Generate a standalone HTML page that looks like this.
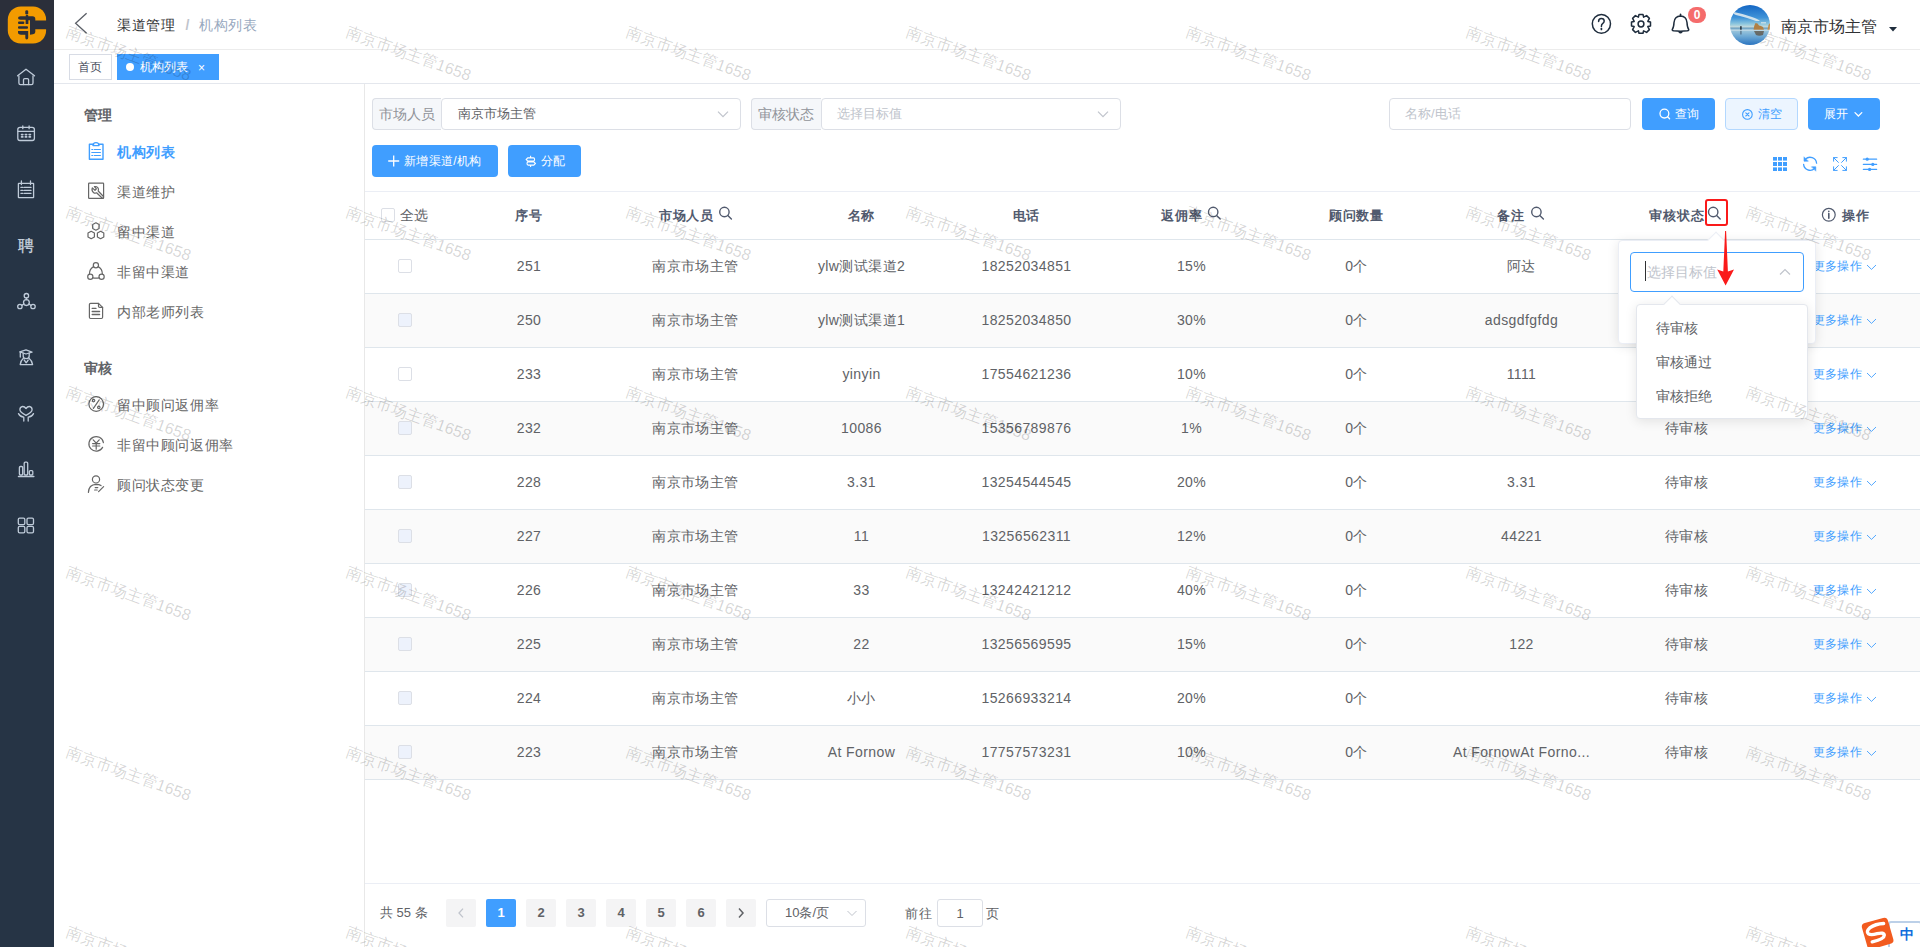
<!DOCTYPE html>
<html><head><meta charset="utf-8"><style>
*{box-sizing:border-box;margin:0;padding:0}
html,body{width:1920px;height:947px;overflow:hidden;background:#fff;font-family:"Liberation Sans",sans-serif;font-size:14px;color:#606266}
.a{position:absolute}
svg{display:block}
#side{left:0;top:0;width:54px;height:947px;background:#263445}
#logo{left:0;top:0;width:54px;height:50px;background:#2b2f3a}
#nav{left:54px;top:0;width:1866px;height:50px;border-bottom:1px solid #ececec}
#tags{left:54px;top:50px;width:1866px;height:34px;border-bottom:1px solid #e4e7ed}
.tag{position:absolute;top:4px;height:26px;line-height:24px;font-size:12px;border:1px solid #d8dce5;color:#495060;white-space:nowrap}
#sub{left:54px;top:84px;width:311px;height:863px;border-right:1px solid #e8e8e8}
.st{position:absolute;left:30px;font-size:14px;color:#606266;font-weight:bold;line-height:20px;margin-top:1px;letter-spacing:0.3px}
.si{position:absolute;left:63px;font-size:14px;color:#666;line-height:20px;white-space:nowrap;letter-spacing:0.6px;margin-top:1px}
.sic{position:absolute;left:33px}
.inp{position:absolute;height:32px;border:1px solid #dcdfe6;border-radius:4px;background:#fff}
.lab{position:absolute;height:32px;border:1px solid #dcdfe6;border-radius:4px 0 0 4px;background:#f5f7fa;color:#909399;line-height:30px;font-size:14px;padding-left:6px;border-right:0}
.btn{position:absolute;height:32px;border-radius:4px;background:#409eff;color:#fff;font-size:12px;line-height:32px;white-space:nowrap;letter-spacing:0.3px}
.row{position:absolute;left:365px;width:1555px;height:54px;border-bottom:1px solid #dfe6ec}
.row.alt{background:#fafafa}
.c{position:absolute;top:0px;height:53px;line-height:53px;text-align:center;white-space:nowrap;letter-spacing:0.4px}
.cb{position:absolute;width:14px;height:14px;border:1px solid #dcdfe6;border-radius:2px;background:#fff}
.cb.dis{background:#edf2fc}
.more{color:#409eff;font-size:12px}
.pg{position:absolute;top:899px;width:30px;height:28px;line-height:28px;text-align:center;background:#f4f4f5;color:#606266;font-weight:bold;font-size:13px;border-radius:2px}
.wmt{position:absolute;font-size:16px;color:rgba(0,0,0,0.17);transform-origin:0 0;transform:rotate(20deg);white-space:nowrap;pointer-events:none;z-index:100}
</style></head><body>
<div id="side" class="a"></div>
<div id="logo" class="a"></div>
<svg class="a" style="left:0;top:0" width="54" height="50" viewBox="0 0 54 50"><rect x="7.8" y="6.4" width="38.3" height="37.1" rx="13" ry="13" fill="#f39b00"/><g fill="#2b2f3a"><path d="M18 18 Q18 16.2 20.5 16.2 H32.5 Q35.3 16.2 35.3 19 V20.4 H47 V29.3 H35.3 V32 Q35.3 33.8 33 34.2 L30 34.8 V20.2 H28.2 V24 H25.8 V19.7 H20.5 Q18 19.7 18 18 Z"/><rect x="18" y="21.5" width="6.3" height="2.5" rx="1"/><rect x="18" y="26.2" width="10" height="2.6" rx="1"/><path d="M18 31 H28.2 V37.8 Q28.2 39.6 26.7 39.6 Q25.3 39.6 25.3 37.8 V34.8 H21 Q18 34.6 18 32.5 Z"/><rect x="25.3" y="10.2" width="2.9" height="4.4" rx="1.4"/><rect x="25.8" y="15" width="2.4" height="9" rx="0.5"/></g></svg>
<svg class="a" style="left:9px;top:60px" width="34" height="34" viewBox="9 60 34 34" fill="none" stroke="#bfcbd9" stroke-width="1.3" stroke-linecap="round" stroke-linejoin="round"><path d="M17.6 75.8 L26 69.2 L34.5 75.8"/><path d="M18.9 76 V83 Q18.9 84.6 20.5 84.6 H31.4 Q33 84.6 33 83 V76"/><path d="M23.5 84.6 V79.8 Q23.5 78.6 24.7 78.6 H27.4 Q28.6 78.6 28.6 79.8 V84.6"/></svg>
<svg class="a" style="left:9px;top:116px" width="34" height="34" viewBox="9 116 34 34" fill="none" stroke="#bfcbd9" stroke-width="1.3" stroke-linecap="round" stroke-linejoin="round"><rect x="17.8" y="127.3" width="16.6" height="13.2" rx="2.2"/><path d="M18 131.3 H34.3"/><path d="M22.8 126 V128.7 M29.1 126 V128.7"/><g stroke-width="1.6"><path d="M21.5 134.6h1.4M25.3 134.6h1.4M29.1 134.6h1.4M21.5 136.9h1.4M25.3 136.9h1.4M29.1 136.9h1.4"/></g></svg>
<svg class="a" style="left:9px;top:172px" width="34" height="34" viewBox="9 172 34 34" fill="none" stroke="#bfcbd9" stroke-width="1.3" stroke-linecap="round" stroke-linejoin="round"><rect x="18.4" y="183.3" width="15.2" height="14.3" rx="0.4"/><path d="M21.4 181 V184.5 M30.5 181 V184.5"/><path d="M20.9 187.4h2M24.2 187.4h6.8M20.9 190.4h2M24.2 190.4h6.8M20.9 193.3h2M24.2 193.3h6.8"/></svg>
<div class="a" style="left:17px;top:237px;width:18px;height:18px;line-height:18px;font-size:16px;color:#c8d2de;text-align:center;-webkit-text-stroke:0.3px #c8d2de">聘</div>
<svg class="a" style="left:9px;top:284px" width="34" height="34" viewBox="9 284 34 34" fill="none" stroke="#bfcbd9" stroke-width="1.3" stroke-linecap="round" stroke-linejoin="round"><circle cx="26.4" cy="295.7" r="2.2"/><circle cx="26.4" cy="302.6" r="2.9"/><circle cx="19.9" cy="306.5" r="2.2"/><circle cx="33" cy="306.5" r="2.2"/><path d="M26.4 297.9 V299.7 M23.8 303.9 L22 305.3 M29 303.9 L30.8 305.3"/></svg>
<svg class="a" style="left:9px;top:340px" width="34" height="34" viewBox="9 340 34 34" fill="none" stroke="#bfcbd9" stroke-width="1.3" stroke-linecap="round" stroke-linejoin="round"><path d="M19.8 351.8 L26 349.8 L32 352.2 L26 354 Z"/><path d="M20.3 352 V357"/><path d="M23.2 353.2 V356 Q23.2 358.6 26.2 358.6 Q29.2 358.6 29.2 356 V353.2"/><path d="M23.4 358.2 Q20.4 360.8 20.2 364.6 H32.6 Q32.2 360.8 29 358.2"/><path d="M24.2 360 L26.2 362.8 L28.2 360"/></svg>
<svg class="a" style="left:9px;top:396px" width="34" height="34" viewBox="9 396 34 34" fill="none" stroke="#bfcbd9" stroke-width="1.3" stroke-linecap="round" stroke-linejoin="round"><path d="M26 408.5 Q24.5 406.4 22.6 406.5 Q19.9 406.8 19.9 409.8 Q19.9 412.3 26 415.3 Q32.1 412.3 32.1 409.8 Q32.1 406.8 29.4 406.5 Q27.5 406.4 26 408.5 Z"/><path d="M18.5 413.6 Q20 416.6 23.8 417.2 V421"/><path d="M33.5 413.6 Q32 416.6 28.2 417.2 V421"/></svg>
<svg class="a" style="left:9px;top:452px" width="34" height="34" viewBox="9 452 34 34" fill="none" stroke="#bfcbd9" stroke-width="1.3" stroke-linecap="round" stroke-linejoin="round"><rect x="19.4" y="466.5" width="3.3" height="8.5" rx="1"/><rect x="24.2" y="462.2" width="3.5" height="12.8" rx="1"/><rect x="29.3" y="470.6" width="3.5" height="4.4" rx="1"/><path d="M18.5 476.5 H33.8" stroke-width="1.5"/></svg>
<svg class="a" style="left:9px;top:508px" width="34" height="34" viewBox="9 508 34 34" fill="none" stroke="#bfcbd9" stroke-width="1.3" stroke-linecap="round" stroke-linejoin="round"><rect x="18.3" y="518.1" width="6.5" height="6.5" rx="1.3"/><rect x="27" y="518.1" width="6.5" height="6.5" rx="1.3"/><rect x="18.3" y="526.4" width="6.5" height="6.5" rx="1.3"/><rect x="27" y="526.4" width="6.5" height="6.5" rx="1.3"/></svg>
<div id="nav" class="a"></div>
<svg class="a" style="left:70px;top:8px" width="24" height="32" viewBox="70 8 24 32" fill="none" stroke="#5a5e66" stroke-width="1.3"><path d="M86.6 13.3 L75.6 23.3 L86.6 33.3"/></svg>
<svg class="a" style="left:1585px;top:5px" width="130" height="40" viewBox="1585 5 130 40" fill="none" stroke="#1f2d3d" stroke-width="1.5" stroke-linecap="round" stroke-linejoin="round"><ellipse cx="1601.4" cy="23.8" rx="9.1" ry="9.4"/><path d="M1598.6 21.4 Q1598.6 18.4 1601.4 18.4 Q1604.2 18.4 1604.2 21 Q1604.2 22.6 1602.6 23.6 Q1601.4 24.4 1601.4 26.4"/><path d="M1601.4 28.6 V29.4" stroke-width="1.7"/><path d="M1639 14.5 H1643 L1643.6 17.2 L1646.6 15.6 L1649.4 18.4 L1647.8 21.4 L1650.5 22 V26 L1647.8 26.6 L1649.4 29.6 L1646.6 32.4 L1643.6 30.8 L1643 33.3 H1639 L1638.4 30.8 L1635.4 32.4 L1632.6 29.6 L1634.2 26.6 L1631.5 26 V22 L1634.2 21.4 L1632.6 18.4 L1635.4 15.6 L1638.4 17.2 Z"/><circle cx="1641" cy="24" r="2.9"/><path d="M1680.5 14.2 V16"/><path d="M1680.5 16 Q1674.6 16.2 1674 22.5 Q1673.8 27.4 1672.4 29.2 Q1671.8 30.4 1673.6 30.8 Q1680.5 31.6 1687.4 30.8 Q1689.2 30.4 1688.6 29.2 Q1687.2 27.4 1687 22.5 Q1686.4 16.2 1680.5 16 Z"/><path d="M1679 31.8 Q1680.5 33.6 1682 31.8"/></svg>
<div class="a" style="left:1688px;top:7px;width:18px;height:16px;border-radius:8px;background:#f56c6c;color:#fff;font-size:12px;font-weight:bold;line-height:16px;text-align:center">0</div>
<svg class="a" style="left:1730px;top:5px;z-index:150" width="40" height="40" viewBox="0 0 40 40"><defs><clipPath id="avc"><circle cx="20" cy="20" r="20"/></clipPath><linearGradient id="sky" x1="0" y1="0" x2="0" y2="1"><stop offset="0" stop-color="#1466c4"/><stop offset="0.55" stop-color="#3f93d8"/><stop offset="0.82" stop-color="#8cc6de"/><stop offset="1" stop-color="#d9e2dc"/></linearGradient><linearGradient id="sea" x1="0" y1="0" x2="0" y2="1"><stop offset="0" stop-color="#5d93b8"/><stop offset="0.15" stop-color="#9fc8dc"/><stop offset="0.5" stop-color="#6ea9d4"/><stop offset="1" stop-color="#2a74c0"/></linearGradient></defs><g clip-path="url(#avc)"><rect width="40" height="23" fill="url(#sky)"/><rect y="22.5" width="40" height="17.5" fill="url(#sea)"/><path d="M4 7 Q14 9 22 12 Q28 14 30 16 L26 16 Q18 13 10 11 Q5 10 4 9 Z" fill="#e8eef0" opacity="0.85"/><path d="M31 17 H36 V18.5 H31 Z" fill="#e0e8ea" opacity="0.7"/><path d="M23.5 25 L24.2 21 L25.5 18 L27.5 18.6 L29 20.6 L31 21 L33 22 L34 25 Z" fill="#b08045"/><path d="M37.5 25 L38.5 20 L40 18 V25 Z" fill="#c48d48"/><path d="M24 26 H34 L33 30 Q29 31.5 26 30 Z" fill="#5e5040" opacity="0.75"/><rect x="10.2" y="21.2" width="1.4" height="4" fill="#1d2630"/><rect x="10.2" y="26" width="1.4" height="3.5" fill="#3a4a5a" opacity="0.6"/><path d="M0 24.5 H40 V26 H0 Z" fill="#d7e6ee" opacity="0.5"/></g></svg>
<div class="a" style="left:1781px;top:17px;font-size:16px;line-height:20px;color:#303133;white-space:nowrap">南京市场主管</div>
<svg class="a" style="left:1887px;top:25px" width="12" height="8" viewBox="0 0 12 8"><path d="M2 2 H10 L6 6.5 Z" fill="#1f2d3d"/></svg>
<div class="a" style="left:117px;top:15px;font-size:14px;line-height:20px;color:#303133;white-space:nowrap;letter-spacing:0.6px">渠道管理<span style="color:#c0c4cc;margin:0 9px 0 10px;font-weight:bold">/</span><span style="color:#97a8be">机构列表</span></div>
<div id="tags" class="a">
<div class="tag" style="left:15px;width:43px;padding-left:8px">首页</div>
<div class="tag" style="left:63px;width:102px;background:#409eff;border-color:#409eff;color:#fff;padding-left:22px">机构列表<span style="position:absolute;left:8px;top:8px;width:8px;height:8px;border-radius:50%;background:#fff"></span><span style="margin-left:10px;font-size:12px;position:relative;top:1px">×</span></div>
</div>
<div id="sub" class="a"></div>
<div class="st" style="top:104px;left:84px">管理</div>
<div class="si" style="left:117px;top:141px;color:#409eff;font-weight:bold">机构列表</div>
<div class="si" style="left:117px;top:181px;">渠道维护</div>
<div class="si" style="left:117px;top:221px;">留中渠道</div>
<div class="si" style="left:117px;top:261px;">非留中渠道</div>
<div class="si" style="left:117px;top:301px;">内部老师列表</div>
<div class="st" style="top:357px;left:84px">审核</div>
<div class="si" style="left:117px;top:394px">留中顾问返佣率</div>
<div class="si" style="left:117px;top:434px">非留中顾问返佣率</div>
<div class="si" style="left:117px;top:474px">顾问状态变更</div>
<div class="lab" style="left:372px;top:98px;width:69px">市场人员</div>
<div class="inp" style="left:441px;top:98px;width:300px;border-radius:4px;padding-left:16px;line-height:30px;color:#606266;font-size:13px">南京市场主管</div>
<div class="lab" style="left:751px;top:98px;width:70px">审核状态</div>
<div class="inp" style="left:821px;top:98px;width:300px;border-radius:4px;padding-left:15px;line-height:30px;color:#c0c4cc;font-size:13px">选择目标值</div>
<div class="inp" style="left:1389px;top:98px;width:242px;padding-left:15px;line-height:30px;color:#c0c4cc;font-size:13px">名称/电话</div>
<div class="btn" style="left:1642px;top:98px;width:73px;padding-left:33px">查询</div>
<div class="btn" style="left:1725px;top:98px;width:73px;padding-left:32px;background:#ecf5ff;border:1px solid #b3d8ff;color:#409eff;line-height:30px">清空</div>
<div class="btn" style="left:1808px;top:98px;width:72px;padding-left:16px">展开</div>
<div class="btn" style="left:372px;top:145px;width:126px;padding-left:32px">新增渠道/机构</div>
<div class="btn" style="left:508px;top:145px;width:73px;padding-left:33px">分配</div>
<svg class="a" style="left:80px;top:130px" width="40" height="370" viewBox="80 130 40 370" fill="none" stroke-linecap="round" stroke-linejoin="round"><g stroke="#409eff" stroke-width="1.4"><path d="M93.6 144.2 H89.4 V159.3 H103 V144.2 H98.6"/><path d="M93 145.6 Q93 142.6 96 142.6 Q99 142.6 99 145.6 Z"/><path d="M91.8 149.5h1M94.4 149.5h6M91.8 152.5h8.6M91.8 155.5h1M94.4 155.5h6" stroke-width="1.2"/></g><g stroke="#666" stroke-width="1.2"><rect x="88.6" y="183.2" width="15" height="15.2" rx="0.6"/><path d="M92.4 187.8 Q91.2 190.8 93.4 192.4 Q95 193.6 96.6 192.8 L101.8 197.8 Q102.8 198.6 103.4 197.6 Q103.8 196.8 103 196 L98.2 191 Q99 189 97.8 187.6 Q96.4 186.2 94.4 186.6 L96.4 188.8 L95 190.4 Z"/><path d="M95.9 222.8 L99.1 224.6 V228.4 L95.9 230.2 L92.7 228.4 V224.6 Z"/><path d="M91.2 231.3 L94.4 233.1 V236.9 L91.2 238.7 L88 236.9 V233.1 Z"/><path d="M100.6 231.3 L103.8 233.1 V236.9 L100.6 238.7 L97.4 236.9 V233.1 Z"/><circle cx="95.9" cy="265.3" r="2.6"/><circle cx="90.3" cy="276.8" r="2.6"/><circle cx="101.6" cy="276.8" r="2.6"/><path d="M93.6 266.6 Q89.4 268.8 89.4 274.2 M98.2 266.6 Q102.4 268.8 102.4 274.2 M92.9 277.8 Q95.9 278.6 99 277.8"/><path d="M98.5 303.3 H90.6 Q89.4 303.3 89.4 304.5 V317.3 Q89.4 318.5 90.6 318.5 H101.4 Q102.6 318.5 102.6 317.3 V307.4 Z"/><path d="M98.5 303.3 V306.2 Q98.5 307.4 99.7 307.4 H102.6"/><path d="M92.2 308.4h3.8M92.2 311.5h7.4M92.2 314.5h7.4" stroke-width="1.3"/><circle cx="96.2" cy="404" r="7.3"/><path d="M99.2 399.8 L93.4 408.4"/><circle cx="93.6" cy="400.6" r="1.2"/><circle cx="98.8" cy="407.4" r="1.2"/><path d="M102.6 447.4 A7.3 7.3 0 1 1 103.4 442.6"/><path d="M93.2 439.8 L96.2 443.2 L99.2 439.8 M92.6 443.6h7.2M92.6 446h7.2M96.2 443.2V449.2"/><circle cx="96" cy="479.4" r="3.6"/><path d="M88.4 492.4 Q88.8 484.8 96 484.4 Q99.2 484.4 101 485.6"/><path d="M95.2 487.6h2.6M94.6 490h2.6M98.6 491.6 L103.6 486.6"/></g></svg>
<svg class="a" style="left:372px;top:145px" width="220" height="33" viewBox="372 145 220 33" fill="none" stroke="#fff" stroke-width="1.3"><path d="M393.7 155.5 V166.5 M388.2 161 H399.2"/><path d="M526.2 159.5 L527.8 157.9 H533.4 Q534.6 157.9 534.6 159.5 Q534.6 161.1 533.4 161.1 H527.8 Z M535.4 163.5 L533.8 161.9 H528.2 Q527 161.9 527 163.5 Q527 165.1 528.2 165.1 H533.8 Z M530.6 155.8 V157.9 M530.6 165.1 V167" stroke-width="1.1"/></svg>
<svg class="a" style="left:1642px;top:98px" width="240" height="32" viewBox="1642 98 240 32" fill="none" stroke-width="1.3" stroke-linecap="round"><circle cx="1664.4" cy="113.6" r="4.4" stroke="#fff"/><path d="M1667.6 116.8 L1669.6 118.8" stroke="#fff"/><circle cx="1747.4" cy="114.4" r="4.8" stroke="#409eff" stroke-width="1.1"/><path d="M1745.8 112.8 L1749 116 M1749 112.8 L1745.8 116" stroke="#409eff" stroke-width="1.1"/><path d="M1855 112.6 L1858.4 116 L1861.8 112.6" stroke="#fff"/></svg>
<svg class="a" style="left:700px;top:98px" width="420" height="32" viewBox="700 98 420 32" fill="none" stroke="#c0c4cc" stroke-width="1.2"><path d="M718 111.6 L723 116.6 L728 111.6"/><path d="M1098 111.6 L1103 116.6 L1108 111.6"/></svg>
<svg class="a" style="left:1770px;top:150px" width="120" height="30" viewBox="1770 150 120 30" fill="none" stroke="#409eff" stroke-width="1.3" stroke-linecap="round"><g fill="#409eff" stroke="none"><rect x="1773" y="157" width="4" height="3.6"/><rect x="1778" y="157" width="4" height="3.6"/><rect x="1783" y="157" width="4" height="3.6"/><rect x="1773" y="162" width="4" height="4"/><rect x="1778" y="162" width="4" height="4"/><rect x="1783" y="162" width="4" height="4"/><rect x="1773" y="167.4" width="4" height="3.6"/><rect x="1778" y="167.4" width="4" height="3.6"/><rect x="1783" y="167.4" width="4" height="3.6"/></g><path d="M1816.6 163.2 A6.6 6.6 0 0 0 1805.4 159.2"/><path d="M1803.6 164.4 A6.6 6.6 0 0 0 1814.6 168.6"/><path d="M1804 157.2 V161.2 H1808 Z" fill="#409eff" stroke-width="0.6"/><path d="M1815.8 170.8 V166.8 H1811.8 Z" fill="#409eff" stroke-width="0.6"/><g stroke-width="1"><path d="M1833.6 161.2 V157.6 H1837.2 M1833.6 157.6 L1838.4 162.4 M1846.4 161.2 V157.6 H1842.8 M1846.4 157.6 L1841.6 162.4 M1833.6 166.8 V170.4 H1837.2 M1833.6 170.4 L1838.4 165.6 M1846.4 166.8 V170.4 H1842.8 M1846.4 170.4 L1841.6 165.6"/></g><path d="M1863.4 159.2 H1876.6 M1863.4 164.4 H1876.6 M1863.4 169.4 H1876.6"/><g fill="#409eff" stroke="none"><circle cx="1867.2" cy="159.2" r="1.6"/><circle cx="1872.8" cy="164.4" r="1.6"/><circle cx="1869.6" cy="169.4" r="1.6"/></g></svg>
<div class="a" style="left:365px;top:191px;width:1555px;height:49px;border-top:1px solid #ebeef5;border-bottom:1px solid #dfe6ec"></div>
<div class="cb" style="left:381px;top:208px"></div>
<div class="a" style="left:400px;top:205px;line-height:20px;color:#606266">全选</div>
<div class="c" style="left:446px;width:166px;top:192px;height:48px;line-height:48px;font-weight:bold;font-size:13px;letter-spacing:0.8px;color:#515a6e;">序号</div>
<div class="c" style="left:612px;width:167px;top:192px;height:48px;line-height:48px;font-weight:bold;font-size:13px;letter-spacing:0.8px;color:#515a6e;padding-right:18px">市场人员</div>
<div class="c" style="left:779px;width:165px;top:192px;height:48px;line-height:48px;font-weight:bold;font-size:13px;letter-spacing:0.8px;color:#515a6e;">名称</div>
<div class="c" style="left:944px;width:165px;top:192px;height:48px;line-height:48px;font-weight:bold;font-size:13px;letter-spacing:0.8px;color:#515a6e;">电话</div>
<div class="c" style="left:1109px;width:165px;top:192px;height:48px;line-height:48px;font-weight:bold;font-size:13px;letter-spacing:0.8px;color:#515a6e;padding-right:19px">返佣率</div>
<div class="c" style="left:1274px;width:165px;top:192px;height:48px;line-height:48px;font-weight:bold;font-size:13px;letter-spacing:0.8px;color:#515a6e;">顾问数量</div>
<div class="c" style="left:1439px;width:165px;top:192px;height:48px;line-height:48px;font-weight:bold;font-size:13px;letter-spacing:0.8px;color:#515a6e;padding-right:21px">备注</div>
<div class="c" style="left:1604px;width:165px;top:192px;height:48px;line-height:48px;font-weight:bold;font-size:13px;letter-spacing:0.8px;color:#515a6e;padding-right:19px">审核状态</div>
<div class="c" style="left:1769px;width:151px;top:192px;height:48px;line-height:48px;font-weight:bold;font-size:13px;letter-spacing:0.8px;color:#515a6e;padding-left:23px">操作</div>
<svg class="a" style="left:700px;top:200px" width="1200" height="30" viewBox="700 200 1200 30" fill="none" stroke="#515a6e" stroke-width="1.4" stroke-linecap="round"><circle cx="724.4" cy="212" r="4.7"/><path d="M727.8 215.4 L731.4 219"/><circle cx="1213.2" cy="212" r="4.7"/><path d="M1216.6000000000001 215.4 L1220.2 219"/><circle cx="1536.4" cy="212" r="4.7"/><path d="M1539.8000000000002 215.4 L1543.4 219"/><circle cx="1713.2" cy="212" r="4.7"/><path d="M1716.6000000000001 215.4 L1720.2 219"/><circle cx="1828.8" cy="214.8" r="6.4" stroke-width="1.2"/><path d="M1828.8 213.6 V218.2 M1828.8 211.2 V211.4" stroke-width="1.6"/></svg>
<div class="row" style="top:240px">
<div class="cb" style="left:33px;top:19px"></div>
<div class="c" style="left:81px;width:166px">251</div>
<div class="c" style="left:247px;width:167px">南京市场主管</div>
<div class="c" style="left:414px;width:165px">ylw测试渠道2</div>
<div class="c" style="left:579px;width:165px">18252034851</div>
<div class="c" style="left:744px;width:165px">15%</div>
<div class="c" style="left:909px;width:165px">0个</div>
<div class="c" style="left:1074px;width:165px">阿达</div>
<div class="c" style="left:1239px;width:165px">待审核</div>
<div class="c more" style="left:1404px;width:151px;padding-right:14px;letter-spacing:0.3px">更多操作</div>
<svg class="a" style="left:1500px;top:22px" width="12" height="10" viewBox="0 0 12 10" fill="none" stroke="#409eff" stroke-width="0.9"><path d="M2 3 L6.5 7.4 L11 3"/></svg>
</div>
<div class="row alt" style="top:294px">
<div class="cb dis" style="left:33px;top:19px"></div>
<div class="c" style="left:81px;width:166px">250</div>
<div class="c" style="left:247px;width:167px">南京市场主管</div>
<div class="c" style="left:414px;width:165px">ylw测试渠道1</div>
<div class="c" style="left:579px;width:165px">18252034850</div>
<div class="c" style="left:744px;width:165px">30%</div>
<div class="c" style="left:909px;width:165px">0个</div>
<div class="c" style="left:1074px;width:165px">adsgdfgfdg</div>
<div class="c" style="left:1239px;width:165px">待审核</div>
<div class="c more" style="left:1404px;width:151px;padding-right:14px;letter-spacing:0.3px">更多操作</div>
<svg class="a" style="left:1500px;top:22px" width="12" height="10" viewBox="0 0 12 10" fill="none" stroke="#409eff" stroke-width="0.9"><path d="M2 3 L6.5 7.4 L11 3"/></svg>
</div>
<div class="row" style="top:348px">
<div class="cb" style="left:33px;top:19px"></div>
<div class="c" style="left:81px;width:166px">233</div>
<div class="c" style="left:247px;width:167px">南京市场主管</div>
<div class="c" style="left:414px;width:165px">yinyin</div>
<div class="c" style="left:579px;width:165px">17554621236</div>
<div class="c" style="left:744px;width:165px">10%</div>
<div class="c" style="left:909px;width:165px">0个</div>
<div class="c" style="left:1074px;width:165px">1111</div>
<div class="c" style="left:1239px;width:165px">待审核</div>
<div class="c more" style="left:1404px;width:151px;padding-right:14px;letter-spacing:0.3px">更多操作</div>
<svg class="a" style="left:1500px;top:22px" width="12" height="10" viewBox="0 0 12 10" fill="none" stroke="#409eff" stroke-width="0.9"><path d="M2 3 L6.5 7.4 L11 3"/></svg>
</div>
<div class="row alt" style="top:402px">
<div class="cb dis" style="left:33px;top:19px"></div>
<div class="c" style="left:81px;width:166px">232</div>
<div class="c" style="left:247px;width:167px">南京市场主管</div>
<div class="c" style="left:414px;width:165px">10086</div>
<div class="c" style="left:579px;width:165px">15356789876</div>
<div class="c" style="left:744px;width:165px">1%</div>
<div class="c" style="left:909px;width:165px">0个</div>
<div class="c" style="left:1074px;width:165px"></div>
<div class="c" style="left:1239px;width:165px">待审核</div>
<div class="c more" style="left:1404px;width:151px;padding-right:14px;letter-spacing:0.3px">更多操作</div>
<svg class="a" style="left:1500px;top:22px" width="12" height="10" viewBox="0 0 12 10" fill="none" stroke="#409eff" stroke-width="0.9"><path d="M2 3 L6.5 7.4 L11 3"/></svg>
</div>
<div class="row" style="top:456px">
<div class="cb dis" style="left:33px;top:19px"></div>
<div class="c" style="left:81px;width:166px">228</div>
<div class="c" style="left:247px;width:167px">南京市场主管</div>
<div class="c" style="left:414px;width:165px">3.31</div>
<div class="c" style="left:579px;width:165px">13254544545</div>
<div class="c" style="left:744px;width:165px">20%</div>
<div class="c" style="left:909px;width:165px">0个</div>
<div class="c" style="left:1074px;width:165px">3.31</div>
<div class="c" style="left:1239px;width:165px">待审核</div>
<div class="c more" style="left:1404px;width:151px;padding-right:14px;letter-spacing:0.3px">更多操作</div>
<svg class="a" style="left:1500px;top:22px" width="12" height="10" viewBox="0 0 12 10" fill="none" stroke="#409eff" stroke-width="0.9"><path d="M2 3 L6.5 7.4 L11 3"/></svg>
</div>
<div class="row alt" style="top:510px">
<div class="cb dis" style="left:33px;top:19px"></div>
<div class="c" style="left:81px;width:166px">227</div>
<div class="c" style="left:247px;width:167px">南京市场主管</div>
<div class="c" style="left:414px;width:165px">11</div>
<div class="c" style="left:579px;width:165px">13256562311</div>
<div class="c" style="left:744px;width:165px">12%</div>
<div class="c" style="left:909px;width:165px">0个</div>
<div class="c" style="left:1074px;width:165px">44221</div>
<div class="c" style="left:1239px;width:165px">待审核</div>
<div class="c more" style="left:1404px;width:151px;padding-right:14px;letter-spacing:0.3px">更多操作</div>
<svg class="a" style="left:1500px;top:22px" width="12" height="10" viewBox="0 0 12 10" fill="none" stroke="#409eff" stroke-width="0.9"><path d="M2 3 L6.5 7.4 L11 3"/></svg>
</div>
<div class="row" style="top:564px">
<div class="cb dis" style="left:33px;top:19px"></div>
<div class="c" style="left:81px;width:166px">226</div>
<div class="c" style="left:247px;width:167px">南京市场主管</div>
<div class="c" style="left:414px;width:165px">33</div>
<div class="c" style="left:579px;width:165px">13242421212</div>
<div class="c" style="left:744px;width:165px">40%</div>
<div class="c" style="left:909px;width:165px">0个</div>
<div class="c" style="left:1074px;width:165px"></div>
<div class="c" style="left:1239px;width:165px">待审核</div>
<div class="c more" style="left:1404px;width:151px;padding-right:14px;letter-spacing:0.3px">更多操作</div>
<svg class="a" style="left:1500px;top:22px" width="12" height="10" viewBox="0 0 12 10" fill="none" stroke="#409eff" stroke-width="0.9"><path d="M2 3 L6.5 7.4 L11 3"/></svg>
</div>
<div class="row alt" style="top:618px">
<div class="cb dis" style="left:33px;top:19px"></div>
<div class="c" style="left:81px;width:166px">225</div>
<div class="c" style="left:247px;width:167px">南京市场主管</div>
<div class="c" style="left:414px;width:165px">22</div>
<div class="c" style="left:579px;width:165px">13256569595</div>
<div class="c" style="left:744px;width:165px">15%</div>
<div class="c" style="left:909px;width:165px">0个</div>
<div class="c" style="left:1074px;width:165px">122</div>
<div class="c" style="left:1239px;width:165px">待审核</div>
<div class="c more" style="left:1404px;width:151px;padding-right:14px;letter-spacing:0.3px">更多操作</div>
<svg class="a" style="left:1500px;top:22px" width="12" height="10" viewBox="0 0 12 10" fill="none" stroke="#409eff" stroke-width="0.9"><path d="M2 3 L6.5 7.4 L11 3"/></svg>
</div>
<div class="row" style="top:672px">
<div class="cb dis" style="left:33px;top:19px"></div>
<div class="c" style="left:81px;width:166px">224</div>
<div class="c" style="left:247px;width:167px">南京市场主管</div>
<div class="c" style="left:414px;width:165px">小小</div>
<div class="c" style="left:579px;width:165px">15266933214</div>
<div class="c" style="left:744px;width:165px">20%</div>
<div class="c" style="left:909px;width:165px">0个</div>
<div class="c" style="left:1074px;width:165px"></div>
<div class="c" style="left:1239px;width:165px">待审核</div>
<div class="c more" style="left:1404px;width:151px;padding-right:14px;letter-spacing:0.3px">更多操作</div>
<svg class="a" style="left:1500px;top:22px" width="12" height="10" viewBox="0 0 12 10" fill="none" stroke="#409eff" stroke-width="0.9"><path d="M2 3 L6.5 7.4 L11 3"/></svg>
</div>
<div class="row alt" style="top:726px">
<div class="cb dis" style="left:33px;top:19px"></div>
<div class="c" style="left:81px;width:166px">223</div>
<div class="c" style="left:247px;width:167px">南京市场主管</div>
<div class="c" style="left:414px;width:165px">At Fornow</div>
<div class="c" style="left:579px;width:165px">17757573231</div>
<div class="c" style="left:744px;width:165px">10%</div>
<div class="c" style="left:909px;width:165px">0个</div>
<div class="c" style="left:1074px;width:165px">At FornowAt Forno...</div>
<div class="c" style="left:1239px;width:165px">待审核</div>
<div class="c more" style="left:1404px;width:151px;padding-right:14px;letter-spacing:0.3px">更多操作</div>
<svg class="a" style="left:1500px;top:22px" width="12" height="10" viewBox="0 0 12 10" fill="none" stroke="#409eff" stroke-width="0.9"><path d="M2 3 L6.5 7.4 L11 3"/></svg>
</div>
<div class="a" style="left:1618px;top:240px;width:198px;height:104px;background:#fff;border:1px solid #ebeef5;border-radius:4px;box-shadow:0 2px 12px 0 rgba(0,0,0,0.1);z-index:10"></div>
<div class="a" style="left:1710px;top:234px;width:12px;height:12px;background:#fff;border-left:1px solid #ebeef5;border-top:1px solid #ebeef5;transform:rotate(45deg);z-index:211"></div>
<div class="a" style="left:1630px;top:252px;width:174px;height:40px;border:1px solid #409eff;border-radius:4px;background:#fff;z-index:12;padding-left:16px;line-height:38px;color:#c0c4cc;font-size:14px">选择目标值</div>
<div class="a" style="left:1645px;top:261px;width:1px;height:20px;background:#303133;z-index:13"></div>
<svg class="a" style="left:1775px;top:262px;z-index:13" width="20" height="20" viewBox="0 0 20 20" fill="none" stroke="#c0c4cc" stroke-width="1.2"><path d="M5 12.5 L10 7.5 L15 12.5"/></svg>
<div class="a" style="left:1636px;top:304px;width:172px;height:115px;background:#fff;border:1px solid #e4e7ed;border-radius:4px;box-shadow:0 2px 12px 0 rgba(0,0,0,0.1);z-index:20"></div>
<div class="a" style="left:1666px;top:298px;width:12px;height:12px;background:#fff;border-left:1px solid #e4e7ed;border-top:1px solid #e4e7ed;transform:rotate(45deg);z-index:21"></div>
<div class="a" style="left:1656px;top:318px;line-height:20px;font-size:14px;color:#606266;z-index:22;white-space:nowrap">待审核</div>
<div class="a" style="left:1656px;top:352px;line-height:20px;font-size:14px;color:#606266;z-index:22;white-space:nowrap">审核通过</div>
<div class="a" style="left:1656px;top:386px;line-height:20px;font-size:14px;color:#606266;z-index:22;white-space:nowrap">审核拒绝</div>
<div class="a" style="left:1705px;top:199px;width:23px;height:27px;border:2.6px solid #fa1a1a;border-radius:3px;z-index:300"></div>
<svg class="a" style="left:1710px;top:225px;z-index:300" width="30" height="65" viewBox="1710 225 30 65"><path d="M1725.1 231 L1726.1 231 L1727.9 271.5 L1734 269.6 L1725.6 285.4 L1717.2 269.6 L1723.3 271.5 Z" fill="#fa1a1a"/></svg>
<div class="a" style="left:1888px;top:921px;width:34px;height:30px;background:#fff;border:2px solid #bcd0e8;border-radius:3px;z-index:400"></div>
<div class="a" style="left:1900px;top:924px;font-size:14px;line-height:20px;font-weight:bold;color:#0f6ddc;z-index:401">中</div>
<svg class="a" style="left:1856px;top:910px;z-index:402" width="44" height="37" viewBox="1856 910 44 37"><g transform="rotate(-16 1877.5 933)"><rect x="1864" y="920" width="27" height="27" rx="4" fill="#f25b1f"/><path d="M1886 925.6 Q1878 923.6 1871.4 926 Q1866.6 928.4 1868.6 931.4 Q1870.4 933.6 1877 933.6 Q1884 933.8 1883.4 937 Q1882.4 940.6 1870 940" fill="none" stroke="#fff" stroke-width="3.4" stroke-linecap="round"/></g></svg>
<div class="a" style="left:365px;top:883px;width:1555px;border-top:1px solid #ebeef5"></div>
<div class="a" style="left:380px;top:903px;line-height:20px;font-size:13px">共 55 条</div>
<div class="pg" style="left:446px"></div>
<div class="pg" style="left:486px;background:#409eff;color:#fff">1</div>
<div class="pg" style="left:526px">2</div>
<div class="pg" style="left:566px">3</div>
<div class="pg" style="left:606px">4</div>
<div class="pg" style="left:646px">5</div>
<div class="pg" style="left:686px">6</div>
<div class="pg" style="left:726px"></div>
<div class="inp" style="left:766px;top:899px;width:100px;height:28px;border-radius:3px;font-size:13px;line-height:26px;padding-left:18px">10条/页</div>
<div class="a" style="left:905px;top:904px;line-height:20px;font-size:13px;letter-spacing:0.5px">前往</div>
<div class="inp" style="left:937px;top:899px;width:46px;height:28px;border-radius:3px;font-size:13px;line-height:28px;text-align:center">1</div>
<div class="a" style="left:986px;top:904px;line-height:20px;font-size:13px">页</div>
<svg class="a" style="left:446px;top:899px" width="420" height="28" viewBox="446 899 420 28" fill="none" stroke-width="1.3"><path d="M463 908.6 L459 913 L463 917.4" stroke="#c0c4cc"/><path d="M739 908.6 L743 913 L739 917.4" stroke="#606266" stroke-width="1.5"/><path d="M847.5 911 L852 915.5 L856.5 911" stroke="#c0c4cc" stroke-width="1"/></svg>
<div class="wmt" style="left:70px;top:22px">南京市场主管1658</div>
<div class="wmt" style="left:350px;top:22px">南京市场主管1658</div>
<div class="wmt" style="left:630px;top:22px">南京市场主管1658</div>
<div class="wmt" style="left:910px;top:22px">南京市场主管1658</div>
<div class="wmt" style="left:1190px;top:22px">南京市场主管1658</div>
<div class="wmt" style="left:1470px;top:22px">南京市场主管1658</div>
<div class="wmt" style="left:1750px;top:22px">南京市场主管1658</div>
<div class="wmt" style="left:70px;top:202px">南京市场主管1658</div>
<div class="wmt" style="left:350px;top:202px">南京市场主管1658</div>
<div class="wmt" style="left:630px;top:202px">南京市场主管1658</div>
<div class="wmt" style="left:910px;top:202px">南京市场主管1658</div>
<div class="wmt" style="left:1190px;top:202px">南京市场主管1658</div>
<div class="wmt" style="left:1470px;top:202px">南京市场主管1658</div>
<div class="wmt" style="left:1750px;top:202px">南京市场主管1658</div>
<div class="wmt" style="left:70px;top:382px">南京市场主管1658</div>
<div class="wmt" style="left:350px;top:382px">南京市场主管1658</div>
<div class="wmt" style="left:630px;top:382px">南京市场主管1658</div>
<div class="wmt" style="left:910px;top:382px">南京市场主管1658</div>
<div class="wmt" style="left:1190px;top:382px">南京市场主管1658</div>
<div class="wmt" style="left:1470px;top:382px">南京市场主管1658</div>
<div class="wmt" style="left:1750px;top:382px">南京市场主管1658</div>
<div class="wmt" style="left:70px;top:562px">南京市场主管1658</div>
<div class="wmt" style="left:350px;top:562px">南京市场主管1658</div>
<div class="wmt" style="left:630px;top:562px">南京市场主管1658</div>
<div class="wmt" style="left:910px;top:562px">南京市场主管1658</div>
<div class="wmt" style="left:1190px;top:562px">南京市场主管1658</div>
<div class="wmt" style="left:1470px;top:562px">南京市场主管1658</div>
<div class="wmt" style="left:1750px;top:562px">南京市场主管1658</div>
<div class="wmt" style="left:70px;top:742px">南京市场主管1658</div>
<div class="wmt" style="left:350px;top:742px">南京市场主管1658</div>
<div class="wmt" style="left:630px;top:742px">南京市场主管1658</div>
<div class="wmt" style="left:910px;top:742px">南京市场主管1658</div>
<div class="wmt" style="left:1190px;top:742px">南京市场主管1658</div>
<div class="wmt" style="left:1470px;top:742px">南京市场主管1658</div>
<div class="wmt" style="left:1750px;top:742px">南京市场主管1658</div>
<div class="wmt" style="left:70px;top:922px">南京市场主管1658</div>
<div class="wmt" style="left:350px;top:922px">南京市场主管1658</div>
<div class="wmt" style="left:630px;top:922px">南京市场主管1658</div>
<div class="wmt" style="left:910px;top:922px">南京市场主管1658</div>
<div class="wmt" style="left:1190px;top:922px">南京市场主管1658</div>
<div class="wmt" style="left:1470px;top:922px">南京市场主管1658</div>
<div class="wmt" style="left:1750px;top:922px">南京市场主管1658</div>
</body></html>
